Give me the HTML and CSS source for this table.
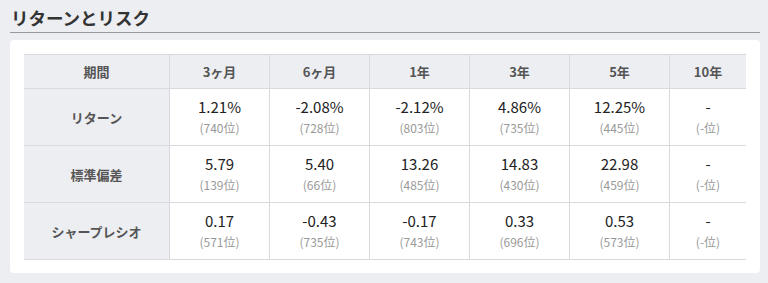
FILE: index.html
```html
<!DOCTYPE html>
<html lang="ja">
<head>
<meta charset="utf-8">
<title>リターンとリスク</title>
<link rel="stylesheet" href="styles.css">
</head>
<body>
<section class="section">
  <h2 class="title">リターンとリスク</h2>
  <div class="card">
    <table class="rr-table">
      <colgroup>
        <col class="c-label"><col class="c-data"><col class="c-data"><col class="c-data"><col class="c-data"><col class="c-data"><col class="c-last">
      </colgroup>
      <thead>
        <tr>
          <th>期間</th><th>3ヶ月</th><th>6ヶ月</th><th>1年</th><th>3年</th><th>5年</th><th>10年</th>
        </tr>
      </thead>
      <tbody>
        <tr>
          <th>リターン</th>
          <td><span class="val">1.21%</span><span class="rank">(740位)</span></td>
          <td><span class="val">-2.08%</span><span class="rank">(728位)</span></td>
          <td><span class="val">-2.12%</span><span class="rank">(803位)</span></td>
          <td><span class="val">4.86%</span><span class="rank">(735位)</span></td>
          <td><span class="val">12.25%</span><span class="rank">(445位)</span></td>
          <td><span class="val">-</span><span class="rank">(-位)</span></td>
        </tr>
        <tr>
          <th>標準偏差</th>
          <td><span class="val">5.79</span><span class="rank">(139位)</span></td>
          <td><span class="val">5.40</span><span class="rank">(66位)</span></td>
          <td><span class="val">13.26</span><span class="rank">(485位)</span></td>
          <td><span class="val">14.83</span><span class="rank">(430位)</span></td>
          <td><span class="val">22.98</span><span class="rank">(459位)</span></td>
          <td><span class="val">-</span><span class="rank">(-位)</span></td>
        </tr>
        <tr class="last">
          <th>シャープレシオ</th>
          <td><span class="val">0.17</span><span class="rank">(571位)</span></td>
          <td><span class="val">-0.43</span><span class="rank">(735位)</span></td>
          <td><span class="val">-0.17</span><span class="rank">(743位)</span></td>
          <td><span class="val">0.33</span><span class="rank">(696位)</span></td>
          <td><span class="val">0.53</span><span class="rank">(573位)</span></td>
          <td><span class="val">-</span><span class="rank">(-位)</span></td>
        </tr>
      </tbody>
    </table>
  </div>
</section>
</body>
</html>
```
FILE: styles.css
```css
* { box-sizing: border-box; }
html, body {
  margin: 0;
  padding: 0;
  background: #eceef2;
}
body {
  font-family: "Noto Sans CJK JP", "Noto Sans", sans-serif;
  color: #333;
}
.section {
  padding: 0 8px 0 10px;
}
.title {
  margin: 0;
  padding: 0 0 0 1px;
  height: 33px;
  font-size: 17.5px;
  line-height: 36px;
  font-weight: 700;
  color: #333;
  border-bottom: 1px solid #999;
}
.card {
  margin-top: 7px;
  width: 750px;
  background: #fff;
  border-radius: 4px;
  padding: 14px 14px 13px 14px;
}
.rr-table {
  width: 100%;
  table-layout: fixed;
  border-collapse: separate;
  border-spacing: 0;
}
.c-label { width: 145px; }
.c-data { width: 100px; }
.c-last { width: 77px; }
.rr-table th,
.rr-table td {
  border-top: 1px solid #d9d9de;
  border-left: 1px solid #d9d9de;
  text-align: center;
  padding: 0;
}
.rr-table tr > :first-child { border-left: none; }
.rr-table tr.last > * { border-bottom: 1px solid #d9d9de; }
.rr-table th {
  background: #edeef2;
  color: #555;
  font-size: 13px;
  font-weight: 700;
}
.rr-table thead th {
  height: 33px;
  line-height: 33px;
}
.rr-table tbody th,
.rr-table tbody td {
  height: 56px;
}
.rr-table td {
  padding: 7px 0;
}
.val {
  display: block;
  font-size: 15px;
  line-height: 21px;
  color: #222;
}
.rank {
  display: block;
  font-size: 12px;
  line-height: 21px;
  color: #999;
}
```
